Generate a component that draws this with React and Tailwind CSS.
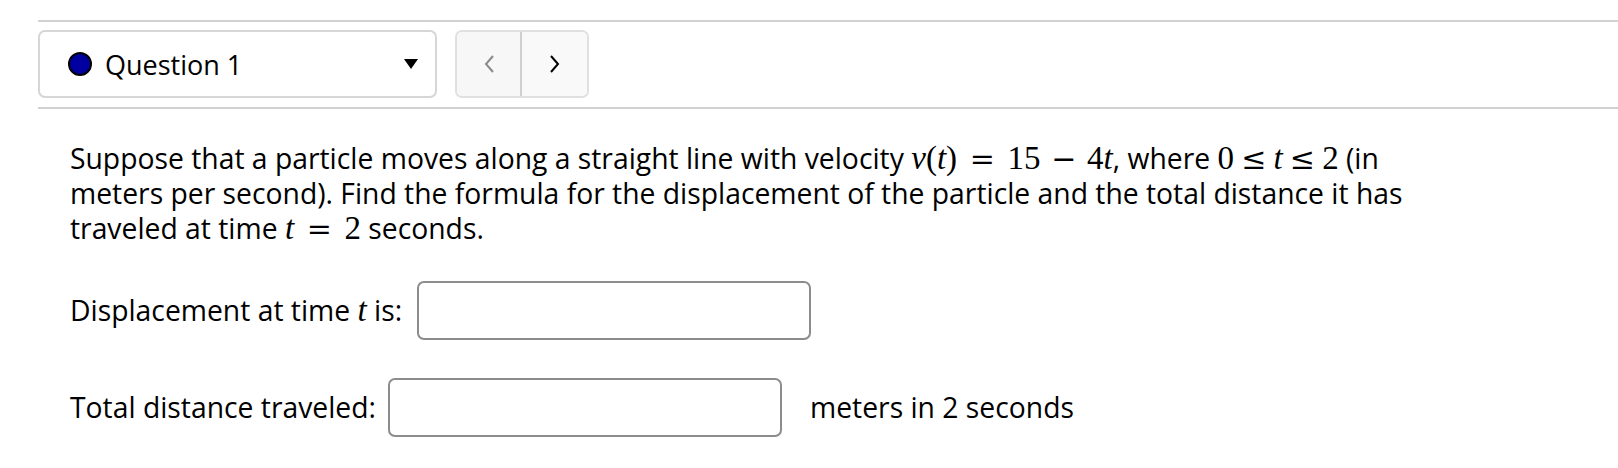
import React from "react";

function M({ children }) {
  return (
    <span className="whitespace-nowrap text-[33px] leading-none font-['Liberation_Serif','DejaVu_Serif',serif]">
      {children}
    </span>
  );
}

function I({ children }) {
  return <span className="italic">{children}</span>;
}

function Eq() {
  return <span className="mx-[0.42em] font-['DejaVu_Serif',serif] text-[30px]">=</span>;
}

function Le() {
  return <span className="mx-[0.24em] font-['DejaVu_Serif',serif] text-[30px]">≤</span>;
}

function Minus() {
  return <span className="mx-[0.36em] font-['DejaVu_Serif',serif] text-[30px]">−</span>;
}

export default function App() {
  return (
    <div className="w-[1618px] h-[468px] bg-white text-black font-['Open_Sans','Noto_Sans',sans-serif] overflow-hidden">
      <div className="pt-[20px] pl-[38px]">
        <div className="h-[2px] bg-[#d2d2d2]" />

        <div className="flex items-center gap-[18px] pt-[8px] pb-[9px]">
          <div className="w-[399px] h-[68px] border-2 border-[#d6d6d6] rounded-[7px] flex items-center pl-[28px] pr-[17px]">
            <span className="w-[24px] h-[24px] rounded-full bg-[#0000a0] border-2 border-black shrink-0" />
            <span className="ml-[13px] text-[27px] flex-1 leading-none">Question 1</span>
            <svg width="14" height="10" viewBox="0 0 14 10">
              <path d="M0 0 L14 0 L7 10 Z" fill="#000" />
            </svg>
          </div>

          <div className="flex h-[68px] border-2 border-[#e0e0e0] rounded-[7px] overflow-hidden">
            <button className="w-[65px] h-full bg-[#f7f7f7] flex items-center justify-center border-r-2 border-[#cfcfcf]">
              <svg width="12" height="20" viewBox="0 0 12 20">
                <path d="M10 2 L3 10 L10 18" fill="none" stroke="#8a8a8a" strokeWidth="2" />
              </svg>
            </button>
            <button className="w-[65px] h-full bg-[#f9f9f9] flex items-center justify-center">
              <svg width="12" height="20" viewBox="0 0 12 20">
                <path d="M2 2 L9 10 L2 18" fill="none" stroke="#000" strokeWidth="2" />
              </svg>
            </button>
          </div>
        </div>

        <div className="h-[2px] bg-[#d2d2d2]" />

        <div className="pl-[32px] pt-[32px]">
          <p className="w-[1500px] text-[28.3px] leading-[35px]">
            Suppose that a particle moves along a straight line with velocity{" "}
            <M>
              <I>v</I>(<I>t</I>)<Eq />15<Minus />4<I>t</I>
            </M>
            , where{" "}
            <M>
              0<Le />
              <I>t</I>
              <Le />2
            </M>{" "}
            (in
            <br />
            meters per second). Find the formula for the displacement of the particle and the total distance it has
            <br />
            traveled at time{" "}
            <M>
              <I>t</I>
              <Eq />2
            </M>{" "}
            seconds.
          </p>

          <div className="flex items-center mt-[35px] text-[28.3px]">
            <span>
              Displacement at time <M><I>t</I></M> is:
            </span>
            <input
              type="text"
              className="ml-[15px] w-[394px] h-[59px] border-2 border-[#8c8c8c] rounded-[7px] outline-none"
            />
          </div>

          <div className="flex items-center mt-[38px] text-[28.3px]">
            <span>Total distance traveled:</span>
            <input
              type="text"
              className="ml-[12px] w-[394px] h-[59px] border-2 border-[#8c8c8c] rounded-[7px] outline-none"
            />
            <span className="ml-[28px]">meters in 2 seconds</span>
          </div>
        </div>
      </div>
    </div>
  );
}
